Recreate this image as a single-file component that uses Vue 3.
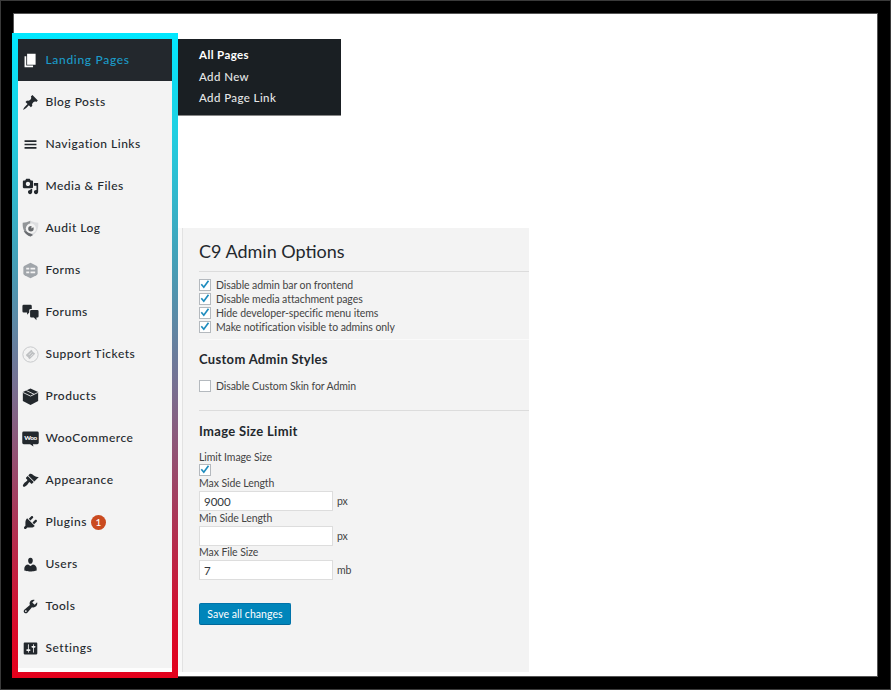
<script setup>
import { ref } from 'vue'

const items = [
  { label: 'Landing Pages', active: true, d: 'M6 15V2h10v13H6zm-1 1h8v2H3V5h2v11z' },
  { label: 'Blog Posts', d: 'M10.44 3.02l1.82-1.82 6.36 6.35-1.83 1.82c-1.05-.68-2.48-.57-3.41.36l-.75.75c-.92.93-1.04 2.35-.35 3.41l-1.83 1.82-2.41-2.41-2.8 2.79c-.42.42-3.38 2.71-3.8 2.29s1.86-3.39 2.28-3.81l2.79-2.79L4.1 9.36l1.83-1.82c1.05.69 2.48.57 3.4-.36l.75-.75c.93-.92 1.05-2.35.36-3.41z' },
  { label: 'Navigation Links', d: 'M17 7V5H3v2h14zm0 4V9H3v2h14zm0 4v-2H3v2h14z' },
  { label: 'Media & Files', d: 'M13 11V4c0-.55-.45-1-1-1h-1.67L9 1H5L3.67 3H2c-.55 0-1 .45-1 1v7c0 .55.45 1 1 1h10c.55 0 1-.45 1-1zM7 4.5c1.38 0 2.5 1.12 2.5 2.5S8.38 9.5 7 9.5 4.5 8.38 4.5 7 5.62 4.5 7 4.5zM14 6h5v10.5c0 1.38-1.12 2.5-2.5 2.5S14 17.88 14 16.5s1.12-2.5 2.5-2.5c.17 0 .34.02.5.05V9h-3V6zm-4 8.05V13h2v3.5c0 1.38-1.12 2.5-2.5 2.5S7 17.88 7 16.5 8.12 14 9.5 14c.17 0 .34.02.5.05z' },
  { label: 'Audit Log', kind: 'shield' },
  { label: 'Forms', kind: 'forms' },
  { label: 'Forums', d: 'M2 1h8q1.500 0 1.500 1.500V6H10q-1.500 0-1.500 1.500V10L6 12.500V10H2Q.5 10 .5 8.500v-6Q.5 1 2 1zM11 7h7q1.500 0 1.500 1.500v6Q19.500 16 18 16h-1v3l-3-3h-3q-1.500 0-1.500-1.500v-6Q9.500 7 11 7z' },
  { label: 'Support Tickets', kind: 'ticket' },
  { label: 'Products', kind: 'box' },
  { label: 'WooCommerce', kind: 'woo' },
  { label: 'Appearance', d: 'M14.48 11.06L7.41 3.99l1.5-1.5c.5-.56 2.3-.47 3.51.32 1.21.8 1.43 1.28 2.91 2.1 1.18.64 2.45 1.26 4.45.85zm-.71.71L6.7 4.7 4.93 6.47c-.39.39-.39 1.02 0 1.41l1.06 1.06c.39.39.39 1.03 0 1.42-.6.6-1.43 1.11-2.21 1.69-.35.26-.7.53-1.01.84C1.43 14.23.4 16.08 1.4 17.07c.99 1 2.84-.03 4.18-1.36.31-.31.58-.66.85-1.02.57-.78 1.08-1.61 1.69-2.21.39-.39 1.02-.39 1.41 0l1.06 1.06c.39.39 1.02.39 1.41 0z' },
  { label: 'Plugins', badge: 1, d: 'M13.11 4.36L9.87 7.6 8 5.73l3.24-3.24c.35-.34 1.05-.2 1.56.32.52.51.66 1.21.31 1.55zm-8 1.77l.91-1.12 9.01 9.01-1.19.84c-.71.71-2.63 1.16-3.82 1.16H6.14L4.9 17.26c-.59.59-1.54.59-2.12 0-.59-.58-.59-1.53 0-2.12l1.24-1.24v-3.88c0-1.13.4-3.19 1.09-3.89zm7.26 3.97l3.24-3.24c.34-.35 1.04-.21 1.55.31.52.51.66 1.21.31 1.55l-3.24 3.25z' },
  { label: 'Users', d: 'M10 9.25c-2.27 0-2.73-3.44-2.73-3.44C7 4.02 7.82 2 9.97 2c2.16 0 2.98 2.02 2.71 3.81 0 0-.41 3.44-2.68 3.44zm0 2.57L12.72 10c2.39 0 4.52 2.33 4.52 4.53v2.49s-3.65 1.13-7.24 1.13c-3.65 0-7.24-1.13-7.24-1.13v-2.49c0-2.25 1.94-4.48 4.47-4.48z' },
  { label: 'Tools', d: 'M16.68 9.77c-1.34 1.34-3.3 1.67-4.95.99l-5.41 6.52c-.99.99-2.59.99-3.58 0s-.99-2.59 0-3.57l6.52-5.42c-.68-1.65-.35-3.61.99-4.95 1.28-1.28 3.12-1.62 4.72-1.06l-2.89 2.89 2.82 2.82 2.86-2.87c.53 1.58.18 3.39-1.08 4.65zM3.81 16.21c.4.39 1.04.39 1.43 0 .4-.4.4-1.04 0-1.43-.39-.4-1.03-.4-1.43 0-.39.39-.39 1.03 0 1.43z' },
  { label: 'Settings', d: 'M18 16V4c0-.55-.45-1-1-1H3c-.55 0-1 .45-1 1v12c0 .55.45 1 1 1h14c.55 0 1-.45 1-1zM8 11h1c.55 0 1 .45 1 1s-.45 1-1 1H8v1.5c0 .28-.22.5-.5.5s-.5-.22-.5-.5V13H6c-.55 0-1-.45-1-1s.45-1 1-1h1V5.5c0-.28.22-.5.5-.5s.5.22.5.5V11zm5-2h-1c-.55 0-1-.45-1-1s.45-1 1-1h1V5.5c0-.28.22-.5.5-.5s.5.22.5.5V7h1c.55 0 1 .45 1 1s-.45 1-1 1h-1v5.5c0 .28-.22.5-.5.5s-.5-.22-.5-.5V9z' },
]

const options = ref([
  { label: 'Disable admin bar on frontend', on: true },
  { label: 'Disable media attachment pages', on: true },
  { label: 'Hide developer-specific menu items', on: true },
  { label: 'Make notification visible to admins only', on: true },
])
const skin = ref(false)
const limit = ref(true)
const fields = ref([
  { label: 'Max Side Length', value: '9000', unit: 'px' },
  { label: 'Min Side Length', value: '', unit: 'px' },
  { label: 'Max File Size', value: '7', unit: 'mb' },
])
</script>

<template>
  <div class="frame">
    <div class="canvas">
      <nav class="sidebar">
        <ul class="menu">
          <li v-for="it in items" :key="it.label" class="item" :class="{ active: it.active }">
            <svg class="icon" viewBox="0 0 20 20">
              <path v-if="it.d" :d="it.d" fill="currentColor" />
              <g v-else-if="it.kind === 'shield'">
                <path d="M10 .8Q5 3 .8 3.200C.3 11 3 16 10 19.500z" fill="#929598" />
                <path d="M10 .8q5 2.200 9.200 2.400C19.700 11 17 16 10 19.500z" fill="#dcdddf" />
                <path d="M2 13q3 5 8 6.500l3-2L8 14z" fill="#696c70" />
                <circle cx="10.500" cy="10" r="6" fill="#f3f3f3" />
                <circle cx="10.500" cy="10.300" r="3.200" fill="#66696c" />
                <path d="M11 10l.5-4 3 1.500z" fill="#f3f3f3" />
              </g>
              <g v-else-if="it.kind === 'forms'">
                <path d="M10 .8l7 3.700q1.400.8 1.400 2v7q0 1.200-1.400 2l-7 3.700-7-3.700q-1.400-.8-1.400-2v-7q0-1.200 1.400-2z" fill="#a0a5aa" />
                <path d="M5 7.800h3.500M10 7.800h5.500M5 12.200h3.500M10 12.200h5.500" fill="none" stroke="#f3f3f3" stroke-width="1.900" />
              </g>
              <g v-else-if="it.kind === 'ticket'">
                <circle cx="10" cy="10" r="9" fill="none" stroke="#c5c7c9" stroke-width="1.100" />
                <path d="M4.500 10.500l6.500-6 1.300 1.300q0 1.600 1.700 1.700l1.500 1.500-6.500 6.500-1.500-1.500q0-1.600-1.700-1.700z" fill="#bec0c2" />
                <path d="M8 10.500l3-3M10 12.500l3-3" stroke="#f3f3f3" stroke-width=".8" />
              </g>
              <g v-else-if="it.kind === 'box'">
                <path d="M10 .5l9 4.300v10.500L10 20l-9-4.700V4.800z" fill="#23282d" />
                <path d="M1 5.200l9 4.300 9-4.300M5.200 3l9 4.400" fill="none" stroke="#f3f3f3" stroke-width="1" />
              </g>
              <g v-else>
                <path d="M2 1.800h16q1.700 0 1.700 1.700v11.500q0 1.700-1.700 1.700h-5.200l.7 2.800-4-2.800H2Q.3 16.700.3 15V3.500Q.3 1.800 2 1.800z" fill="#23282d" />
                <text x="10" y="11.900" text-anchor="middle" class="woo">Woo</text>
              </g>
            </svg>
            <span class="label">{{ it.label }}</span>
            <span v-if="it.badge" class="badge">{{ it.badge }}</span>
          </li>
        </ul>
      </nav>

      <main class="content">
        <ul class="submenu">
          <li class="current">All Pages</li>
          <li>Add New</li>
          <li>Add Page Link</li>
        </ul>

        <form class="panel" @submit.prevent>
          <h1>C9 Admin Options</h1>
          <section class="options">
            <label v-for="o in options" :key="o.label" class="check">
              <input v-model="o.on" type="checkbox" />
              <svg class="box" viewBox="0 0 10 10"><path v-if="o.on" d="M1.300 4.300l2.500 2.900 4.700-6.400" /></svg>
              <span>{{ o.label }}</span>
            </label>
          </section>
          <section class="skin">
            <h2>Custom Admin Styles</h2>
            <label class="check">
              <input v-model="skin" type="checkbox" />
              <svg class="box" viewBox="0 0 10 10"><path v-if="skin" d="M1.300 4.300l2.500 2.900 4.700-6.400" /></svg>
              <span>Disable Custom Skin for Admin</span>
            </label>
          </section>
          <section class="limits">
            <h2>Image Size Limit</h2>
            <label class="check stacked">
              <span>Limit Image Size</span>
              <input v-model="limit" type="checkbox" />
              <svg class="box" viewBox="0 0 10 10"><path v-if="limit" d="M1.300 4.300l2.500 2.900 4.700-6.400" /></svg>
            </label>
            <label v-for="f in fields" :key="f.label" class="field">
              <span class="name">{{ f.label }}</span>
              <span class="entry"><input v-model="f.value" type="text" /><span>{{ f.unit }}</span></span>
            </label>
            <button type="submit">Save all changes</button>
          </section>
        </form>
      </main>
    </div>
  </div>
</template>

<style>
body { margin: 0; background: #000; }
</style>

<style scoped>
* { box-sizing: border-box; }
.frame {
  width: 891px; height: 690px; padding: 12px; background: #000;
  border: 1px solid #3a3a3a;
  font-family: Lato, "Noto Sans", sans-serif;
}
.canvas {
  display: flex; width: 865px; height: 664px;
  background: #fff; border: 1px solid #555;
}
ul { list-style: none; margin: 0; padding: 0; }
.sidebar {
  flex: none; width: 166px; height: 645px; margin: 19px 0 0 -2px; padding: 6px;
  background: linear-gradient(#00e8ff 0%, #1fd0e2 15%, #459eb6 36%, #786f91 55%, #a8395a 74%, #d80a29 92%, #e3001b 100%);
}
.menu { height: 633px; background: #f3f3f3; border-bottom: 4px solid #fdfdfd; }
.item {
  display: flex; align-items: center; height: 42px; padding-left: 4px;
  color: #23282d; font-size: 12px; font-weight: 500; letter-spacing: .5px;
}
.icon { flex: none; width: 17px; height: 17px; margin-right: 6.500px; }
.label { padding-bottom: 2px; }
.active { background: #23282d; color: #1b9bc8; letter-spacing: .68px; }
.active .icon { color: #fff; }
.woo { font: 900 7.500px Lato, sans-serif; letter-spacing: -.4px; fill: #fff; }
.badge {
  width: 15px; height: 15px; margin-left: 4px; border-radius: 50%;
  background: #ca4a1f; color: #fff; font-size: 10px; line-height: 15px;
  letter-spacing: 0; text-align: center;
}
.content { display: flex; flex-direction: column; }
.submenu {
  width: 163px; height: 77px; margin-top: 25px; padding: 5px 0 0 21px;
  background: #1a1f23; border-bottom: 1px solid #888;
  color: #e5e6e7; font-size: 11.500px; font-weight: 500; line-height: 21.500px; letter-spacing: .4px;
}
.current { color: #fff; font-weight: 700; }
.panel {
  width: 347px; height: 444px; margin: 112px 0 0 4px; padding-left: 16px;
  background: #f3f3f3; border-left: 1px solid #e2e2e2; box-shadow: -4px 0 #f8f8f8;
  color: #444; font-size: 10.500px; line-height: 14px; letter-spacing: -.08px;
}
h1 { margin: 0; height: 44px; padding-top: 11px; border-bottom: 1px solid #dcdcdc; color: #23282d; font-size: 18px; font-weight: 400; line-height: 25px; letter-spacing: 0; }
h2 { margin: 0; color: #23282d; font-size: 13px; font-weight: 700; line-height: 18px; letter-spacing: .32px; }
.options { height: 68px; padding-top: 6px; border-bottom: 1px solid #fafafa; }
.check { display: flex; align-items: center; gap: 5px; height: 14px; }
.check input { display: none; }
.box { flex: none; width: 12px; height: 12px; background: #fff; border: 1px solid #b4b9be; }
.box path { fill: none; stroke: #1e8cbe; stroke-width: 1.700; }
.skin { height: 71px; padding-top: 10px; border-bottom: 1px solid #dcdcdc; }
.skin .check { margin-top: 11px; }
.limits { padding-top: 11px; }
.stacked { flex-direction: column; align-items: flex-start; gap: 0; height: 26px; margin-top: 10px; }
.field { display: block; height: 34.500px; }
.name { display: block; height: 15px; }
.entry { display: flex; align-items: center; gap: 4px; }
.entry input {
  width: 134px; height: 20px; padding: 0 4px; border: 1px solid #ddd;
  background: #fff; color: #32373c; font: 11.500px Lato, sans-serif;
}
button {
  width: 92px; height: 22px; margin-top: 23px; padding: 0; border: 1px solid #0073aa;
  border-bottom: 1px solid #006799; border-radius: 2px; background: #0085ba;
  color: #fff; font: 10.500px Lato, sans-serif; letter-spacing: .05px;
}
</style>
